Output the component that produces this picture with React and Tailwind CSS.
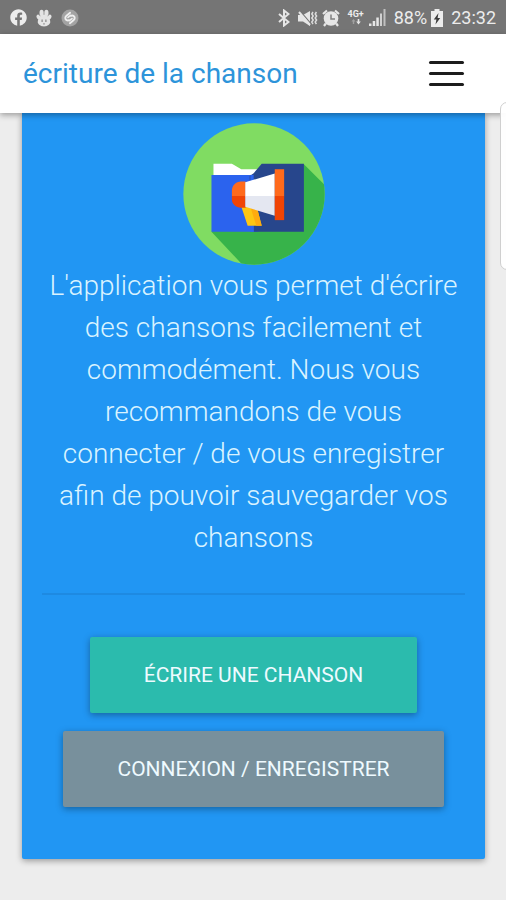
import React from 'react';
import { FaFacebook } from 'react-icons/fa';

const PawIcon = () => (
    <svg width="18" height="18" viewBox="0 0 18 18" fill="#e4e4e4" aria-hidden="true">
        <ellipse cx="6.600" cy="4" rx="2.100" ry="3.200" />
        <ellipse cx="11.400" cy="4" rx="2.100" ry="3.200" />
        <ellipse cx="3.400" cy="8" rx="1.800" ry="2.500" transform="rotate(-25 3.400 8)" />
        <ellipse cx="14.600" cy="8" rx="1.800" ry="2.500" transform="rotate(25 14.600 8)" />
        <path d="M9 5.600c3.400 0 6.600 4.600 6.200 7.600-.4 2.500-3.400 4.200-6.200 4.200s-5.800-1.700-6.200-4.200C2.400 10.200 5.600 5.600 9 5.600z" />
        <path d="M6.500 10.500h1.200v2.600H6.500zM10.300 10.500h1.200v2.600h-1.200zM8.300 14.200h1.400v1.400H8.300z" fill="#868686" />
    </svg>
);

const ShazamIcon = () => (
    <svg width="18" height="18" viewBox="0 0 18 18" fill="none" aria-hidden="true">
        <circle cx="9" cy="9" r="8.500" fill="#a3a3a3" />
        <path d="M8 11.200C6.400 12 4.300 11 4.300 8.900c0-1.200.8-1.900 1.500-2.500l3.300-2.600" stroke="#efefef" strokeWidth="1.900" strokeLinecap="round" />
        <path d="M10 6.800c1.600-.8 3.700.2 3.700 2.300 0 1.200-.8 1.900-1.500 2.500l-3.300 2.600" stroke="#efefef" strokeWidth="1.900" strokeLinecap="round" />
        <path d="M7 8.400l2.600-2.100M11 9.600l-2.600 2.100" stroke="#efefef" strokeWidth="1.600" strokeLinecap="round" />
    </svg>
);

const BluetoothIcon = () => (
    <svg width="12" height="18" viewBox="0 0 12 18" fill="none" stroke="#e6e6e6" strokeWidth="2" aria-hidden="true">
        <path d="M1 5l9.500 8L6 16.500v-15L10.500 5 1 13" />
    </svg>
);

const MuteIcon = () => (
    <svg width="20" height="18" viewBox="0 0 20 18" aria-hidden="true">
        <path d="M0 6h5l7-4v15l-7-4.500H0z" fill="#e6e6e6" />
        <path d="M2.500 2.500l11 13" stroke="#757575" strokeWidth="1.200" />
        <path d="M1 3l11 13" stroke="#e6e6e6" strokeWidth="2" />
        <path d="M15 3l-1.200 2 1.400 2-1.400 2 1.400 2-1.400 2 1.200 2M18.400 3l-1.200 2 1.400 2-1.400 2 1.400 2-1.400 2 1.200 2" fill="none" stroke="#dcdcdc" strokeWidth="1.500" />
    </svg>
);

const AlarmIcon = () => (
    <svg width="18" height="18" viewBox="0 0 18 18" fill="none" aria-hidden="true">
        <circle cx="9" cy="9.500" r="7.300" fill="#e6e6e6" />
        <path d="M1 5l4-3.500M17 5l-4-3.500M3.800 14.500L2 17M14.200 14.500L16 17" stroke="#e6e6e6" strokeWidth="2.200" />
        <path d="M9 5.500V10h4" stroke="#808080" strokeWidth="1.500" />
    </svg>
);

const DataArrows = () => (
    <svg width="10" height="6" viewBox="0 0 10 6" aria-hidden="true">
        <path d="M2.500 0L4.500 2.600h-1.300V5H1.800V2.600H.5z" fill="#a0a0a0" />
        <path d="M7.500 5.500L5.200 2.600h1.500V0h1.600v2.600h1.500z" fill="#e6e6e6" />
    </svg>
);

const SignalIcon = () => (
    <svg width="18" height="17" viewBox="0 0 18 17" fill="#e6e6e6" aria-hidden="true">
        <path d="M1 14.500h2.500V17H1zM4.700 12h2.500v5H4.700zM8.300 8.500h2.500V17H8.300z" />
        <path d="M12 4.500h2V17h-2z" fill="#d0d0d0" />
        <path d="M15.500 0h2v17h-2z" fill="#c0c0c0" />
    </svg>
);

const BatteryIcon = () => (
    <svg width="12" height="18" viewBox="0 0 12 18" aria-hidden="true">
        <path d="M3.500 0h5v2H12v16H0V2h3.500z" fill="#ececec" />
        <path d="M7.500 4L2.800 10.500h2.600L4.500 15.500l4.700-6.600H6.600z" fill="#3c3c3c" />
    </svg>
);

const Logo = () => (
    <svg className="block" width="142" height="142" viewBox="39 39 424 424" role="img" aria-label="Logo">
        <defs>
            <clipPath id="disc">
                <circle cx="251" cy="251" r="211" />
            </clipPath>
        </defs>
        <g clipPath="url(#disc)">
            <path d="M39 39h424v424H39z" fill="#80dc62" />
            <path d="M400 162l100 100v240H254L124 364z" fill="#37b34a" />
        </g>
        {/* folder */}
        <path d="M130 161h55l28 16h55v30H130z" fill="#fff" />
        <path d="M124 194h140v170H124z" fill="#2b63ee" />
        <path d="M400 161H274l-24 28-12 8v10l12 60v97h150z" fill="#27468c" />
        <path d="M240 194h10v170h-10z" fill="#2b63ee" />
        {/* megaphone */}
        <path d="M213 288h46l15 58h-42z" fill="#fdc613" />
        <path d="M240 288h19l15 58h-16z" fill="#ffab0f" />
        <path d="M226 214h-14c-15 0-27 12-27 27v16h41z" fill="#ff6a1c" />
        <path d="M226 257h-41v10c0 15 12 25 27 25h14z" fill="#f04405" />
        <path d="M225 216l88-26v68h-88z" fill="#fff" />
        <path d="M225 257h88v59l-88-27z" fill="#e4e7f1" />
        <path d="M313 177h28v81h-28z" fill="#ff6a1c" />
        <path d="M313 257h28v72h-28z" fill="#f04405" />
    </svg>
);

const StatusBar = () => (
    <div className="flex h-[34px] items-center justify-between bg-[#757575] px-[10px] pt-px text-lg text-[#ececec]">
        <div className="flex items-center gap-2">
            <FaFacebook className="size-[17px] text-[#ececec]" />
            <PawIcon />
            <ShazamIcon />
        </div>
        <div className="flex items-center gap-1">
            <BluetoothIcon />
            <span className="pl-1">
                <MuteIcon />
            </span>
            <AlarmIcon />
            <div className="flex flex-col items-center pl-1">
                <span className="text-[9px] leading-[9px] font-bold">4G+</span>
                <DataArrows />
            </div>
            <SignalIcon />
            <span className="pl-1">88%</span>
            <span className="pr-1">
                <BatteryIcon />
            </span>
            <span>23:32</span>
        </div>
    </div>
);

const Navbar = () => (
    <header className="relative z-10 flex h-[79px] items-center justify-between bg-white pr-[42px] pl-[23px] shadow-[0_2px_6px_rgba(0,0,0,0.35)]">
        <a href="#" className="text-[28px] leading-9 text-[#2d94da]">
            écriture de la chanson
        </a>
        <button type="button" aria-label="Menu" className="flex w-[35px] flex-col gap-2">
            <span className="h-[3px] w-full rounded-sm bg-[#1c1c1c]"></span>
            <span className="h-[3px] w-full rounded-sm bg-[#1c1c1c]"></span>
            <span className="h-[3px] w-full rounded-sm bg-[#1c1c1c]"></span>
        </button>
    </header>
);

const App = () => {
    return (
        <div className="relative min-h-screen overflow-hidden bg-[#ededed] font-['Roboto',sans-serif]">
            <StatusBar />
            <Navbar />

            <main className="pr-[21px] pb-10 pl-[22px]">
                <section className="flex flex-col items-center rounded-b-xs bg-[#2196f3] px-5 pt-[10px] pb-[52px] text-center shadow-[0_2px_6px_rgba(0,0,0,0.35)]">
                    <Logo />
                    <p className="text-[28px] leading-[42px] font-light text-[#d9f3ff]">
                        L'application vous permet d'écrire des chansons facilement et commodément. Nous vous
                        recommandons de vous connecter / de vous enregistrer afin de pouvoir sauvegarder vos
                        chansons
                    </p>
                    <hr className="mt-[34px] mb-[42px] w-full border-t-2 border-[#1e8ae2]" />
                    <div className="flex flex-col items-center gap-[18px] text-[21px] leading-7 text-[#eefaff]">
                        <button type="button" className="rounded-xs bg-[#2bbbad] px-[54px] py-6 shadow-[0_2px_7px_rgba(0,0,0,0.35)]">
                            ÉCRIRE UNE CHANSON
                        </button>
                        <button type="button" className="rounded-xs bg-[#78909c] px-[54px] py-6 shadow-[0_2px_7px_rgba(0,0,0,0.35)]">
                            CONNEXION / ENREGISTRER
                        </button>
                    </div>
                </section>
            </main>

            {/* edge panel handle, floats over the page */}
            <div className="absolute top-[102px] -right-2 z-20 h-[168px] w-[14px] rounded-lg border border-[#cfcfcf] bg-white/95"></div>
        </div>
    );
};

export default App;
